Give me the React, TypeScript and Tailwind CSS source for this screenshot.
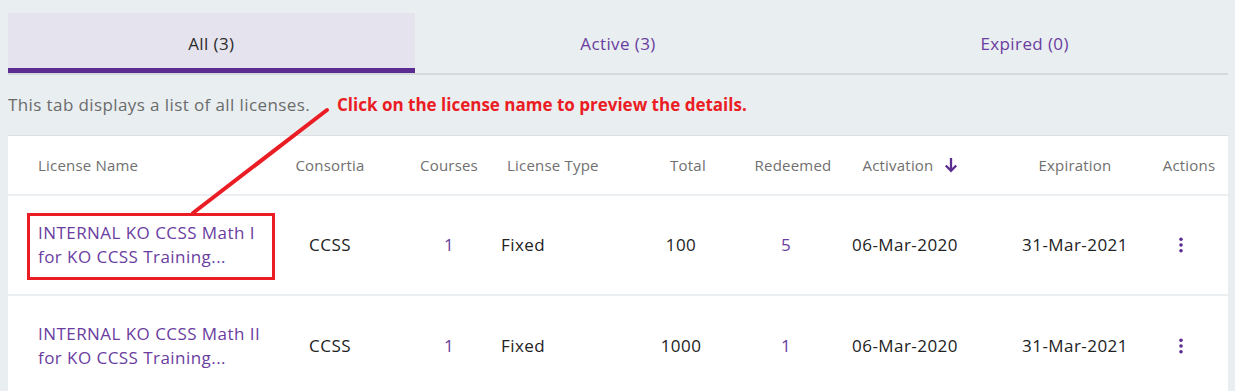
import React from "react";

interface License {
  line1: string;
  line2: string;
  consortia: string;
  courses: number;
  type: string;
  total: number;
  redeemed: number;
  activation: string;
  expiration: string;
}

const licenses: License[] = [
  {
    line1: "INTERNAL KO CCSS Math I",
    line2: "for KO CCSS Training...",
    consortia: "CCSS",
    courses: 1,
    type: "Fixed",
    total: 100,
    redeemed: 5,
    activation: "06-Mar-2020",
    expiration: "31-Mar-2021",
  },
  {
    line1: "INTERNAL KO CCSS Math II",
    line2: "for KO CCSS Training...",
    consortia: "CCSS",
    courses: 1,
    type: "Fixed",
    total: 1000,
    redeemed: 1,
    activation: "06-Mar-2020",
    expiration: "31-Mar-2021",
  },
];

const cols = "grid grid-cols-[252px_140px_98px_122px_122px_98px_160px_150px_78px]";

function Kebab() {
  return (
    <svg width="4" height="16" viewBox="0 0 4 16" className="fill-[#5c2d91]">
      <circle cx="2" cy="2.3" r="1.8" />
      <circle cx="2" cy="8" r="1.8" />
      <circle cx="2" cy="13.7" r="1.8" />
    </svg>
  );
}

function SortArrow() {
  return (
    <svg width="14" height="16" viewBox="0 0 14 16" className="ml-[10px] stroke-[#5c2d91]" fill="none" strokeWidth="2.3">
      <path d="M7 1v13M1.8 8.5l5.2 5.3 5.2-5.3" />
    </svg>
  );
}

export default function App() {
  return (
    <div className="relative h-[391px] w-full overflow-hidden bg-[#e9eef1] pl-2 pr-[7px] pt-[13px] font-['Open_Sans',sans-serif]">
      {/* Tabs */}
      <div className="grid grid-cols-3 border-b-2 border-[#d5d9dc] text-[17px] tracking-[0.4px]">
        <div className="flex h-[60px] items-center justify-center border-b-[5px] border-[#5c2d91] bg-[#e5e3ee] pt-[6px] text-[#2b2b2b]">
          All (3)
        </div>
        <div className="flex h-[60px] items-center justify-center pt-[2px] text-[#6a3d9f]">Active (3)</div>
        <div className="flex h-[60px] items-center justify-center pt-[2px] text-[#6a3d9f]">Expired (0)</div>
      </div>

      {/* Description */}
      <div className="flex h-[60px] items-center">
        <span className="text-[17px] tracking-[0.4px] text-[#6b6b6b]">This tab displays a list of all licenses.</span>
        <span className="ml-[27px] text-[17px] font-bold text-[#ea1c24]">
          Click on the license name to preview the details.
        </span>
      </div>

      {/* Table */}
      <div className="border-t border-[#dcdfe2] bg-white">
        <div className={`${cols} h-[60px] items-center border-b-2 border-[#eceff1] text-[15px] tracking-[0.2px] text-[#707070]`}>
          <div className="pl-[30px]">License Name</div>
          <div className="text-center">Consortia</div>
          <div className="text-center">Courses</div>
          <div className="pl-[9px]">License Type</div>
          <div className="pl-[14px] text-center">Total</div>
          <div className="pl-[4px] text-center">Redeemed</div>
          <div className="flex items-center justify-center pr-[20px]">
            Activation
            <SortArrow />
          </div>
          <div className="text-center">Expiration</div>
          <div className="text-center">Actions</div>
        </div>
        {licenses.map((l, i) => (
          <div
            key={i}
            className={`${cols} h-[100px] items-center text-[17px] tracking-[0.45px] text-[#222] ${i === 0 ? "border-b-2 border-[#eceff1]" : ""}`}
          >
            <div className="relative pl-[30px] leading-[24px] whitespace-nowrap text-[#6a3d9f]">
              <div>{l.line1}</div>
              <div>{l.line2}</div>
              {i === 0 && (
                <div className="absolute left-[19px] top-[-8px] h-[67px] w-[248px] border-[3px] border-[#ea1c24]" />
              )}
            </div>
            <div className="text-center">{l.consortia}</div>
            <div className="text-center text-[#6a3d9f]">{l.courses}</div>
            <div className="pl-[3px]">{l.type}</div>
            <div className="text-center">{l.total}</div>
            <div className="pr-[10px] text-center text-[#6a3d9f]">{l.redeemed}</div>
            <div className="pr-[30px] text-center">{l.activation}</div>
            <div className="text-center">{l.expiration}</div>
            <div className="flex justify-center pr-[16px]">
              <Kebab />
            </div>
          </div>
        ))}
      </div>

      {/* Annotation arrow */}
      <svg className="pointer-events-none absolute left-0 top-0" width="1235" height="391">
        <line x1="327" y1="110" x2="193" y2="213" stroke="#ea1c24" strokeWidth="4" strokeLinecap="round" />
      </svg>
    </div>
  );
}
